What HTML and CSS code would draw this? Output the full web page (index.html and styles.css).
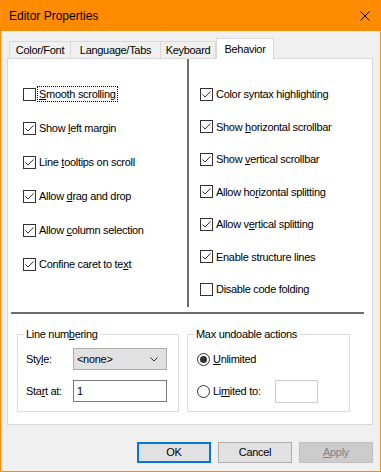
FILE: index.html
```html
<!DOCTYPE html>
<html lang="en">
<head>
    <meta charset="UTF-8">
    <title>Editor Properties</title>
    <link rel="stylesheet" href="styles.css">
</head>
<body>

    <div class="window">
        <!-- title bar -->
        <div class="titlebar">
            <span class="title">Editor Properties</span>
            <svg class="close" width="10" height="10" viewBox="0 0 10 10"><path d="M0.5 0.5L9.5 9.5M9.5 0.5L0.5 9.5" stroke="#000" stroke-width="1" fill="none"/></svg>
        </div>

        <div class="client">
            <!-- tabs -->
            <div class="tabs">
                <div class="tab t-color">Color/Font</div>
                <div class="tab t-lang">Language/Tabs</div>
                <div class="tab t-key">Keyboard</div>
                <div class="tab t-behavior active">Behavior</div>
            </div>

            <div class="panel">
                <div class="options">
                    <div class="col col-left">
                        <div class="opt"><span class="box"></span><span class="lbl focused"><u>S</u>mooth scrolling</span></div>
                        <div class="opt"><span class="box checked"></span><span class="lbl">Show <u>l</u>eft margin</span></div>
                        <div class="opt"><span class="box checked"></span><span class="lbl">Line <u>t</u>ooltips on scroll</span></div>
                        <div class="opt"><span class="box checked"></span><span class="lbl">Allow <u>d</u>rag and drop</span></div>
                        <div class="opt"><span class="box checked"></span><span class="lbl">Allow <u>c</u>olumn selection</span></div>
                        <div class="opt"><span class="box checked"></span><span class="lbl">Confine caret to te<u>x</u>t</span></div>
                    </div>
                    <div class="vsep"></div>
                    <div class="col col-right">
                        <div class="opt"><span class="box checked"></span><span class="lbl">Color syntax hi<u>g</u>hlighting</span></div>
                        <div class="opt"><span class="box checked"></span><span class="lbl">Show <u>h</u>orizontal scrollbar</span></div>
                        <div class="opt"><span class="box checked"></span><span class="lbl">Show <u>v</u>ertical scrollbar</span></div>
                        <div class="opt"><span class="box checked"></span><span class="lbl">Allow ho<u>r</u>izontal splitting</span></div>
                        <div class="opt"><span class="box checked"></span><span class="lbl">Allow v<u>e</u>rtical splitting</span></div>
                        <div class="opt"><span class="box checked"></span><span class="lbl">Enable structure lines</span></div>
                        <div class="opt"><span class="box"></span><span class="lbl">Disable code folding</span></div>
                    </div>
                </div>

                <div class="hsep"></div>

                <div class="groups">
                    <fieldset class="group group-lines">
                        <legend>Line num<u>b</u>ering</legend>
                        <div class="row">
                            <span class="field-label">Sty<u>l</u>e:</span>
                            <div class="select">
                                <span>&lt;none&gt;</span>
                                <svg width="8" height="5" viewBox="0 0 8 5"><path d="M0.5 0.5L4 4L7.5 0.5" stroke="#333" fill="none"/></svg>
                            </div>
                        </div>
                        <div class="row">
                            <span class="field-label">Sta<u>r</u>t at:</span>
                            <div class="textbox">1</div>
                        </div>
                    </fieldset>

                    <fieldset class="group group-undo">
                        <legend>Max undoable actions</legend>
                        <div class="row">
                            <span class="radio selected"></span><span class="lbl"><u>U</u>nlimited</span>
                        </div>
                        <div class="row">
                            <span class="radio"></span><span class="lbl">Li<u>m</u>ited to:</span>
                            <div class="textbox small disabled"></div>
                        </div>
                    </fieldset>
                </div>
            </div>

            <!-- buttons -->
            <div class="buttons">
                <div class="btn default">OK</div>
                <div class="btn">Cancel</div>
                <div class="btn disabled"><u>A</u>pply</div>
            </div>
        </div>
    </div>

</body>
</html>
```

FILE: styles.css
```css
/* base */
body {
    margin: 0;
    padding: 0;
    font-family: 'Liberation Sans', Arial, sans-serif;
    font-size: 11px;
    color: #000;
}

.window {
    width: 381px;
    height: 472px;
    box-sizing: border-box;
    border: 1px solid #ff8c00;
    border-top: none;
    background-color: #f0f0f0;
    display: flex;
    flex-direction: column;
}

/* title bar */
.titlebar {
    height: 31px;
    background-color: #ff8c00;
    display: flex;
    align-items: center;
    justify-content: space-between;
    padding: 0 10px 0 8px;
    flex-shrink: 0;
}

.title {
    font-size: 12px;
    line-height: 14px;
    padding-top: 1px;
}

.close {
    display: block;
}

.client {
    padding: 7px 7px 0 6px;
    letter-spacing: -0.3px;
}

/* tabs */
.tabs {
    display: flex;
    align-items: flex-end;
    height: 21px;
    margin-left: 2px;
}

.tab {
    box-sizing: border-box;
    height: 17px;
    margin-bottom: 1px;
    border: 1px solid #d9d9d9;
    border-bottom: none;
    background-color: #f0f0f0;
    text-align: center;
    line-height: 16px;
}

.t-color { width: 62px; }
.t-lang { width: 91px; margin-left: -1px; }
.t-key { width: 56px; margin-left: -1px; }

.tab.active {
    width: 58px;
    height: 21px;
    margin-bottom: 0;
    margin-left: 0;
    background-color: #fff;
    line-height: 20px;
    position: relative;
    z-index: 1;
}

.panel {
    box-sizing: border-box;
    height: 367px;
    margin-top: -1px;
    border: 1px solid #d9d9d9;
    background-color: #fff;
}

/* check boxes */
.options {
    display: flex;
    height: 248px;
}

.col {
    display: flex;
    flex-direction: column;
}

.col-left {
    width: 179px;
    padding: 18px 0 0 15px;
    box-sizing: border-box;
}

.col-left .opt {
    height: 34px;
}

.col-right {
    flex: 1;
    padding: 18.75px 0 0 11px;
}

.col-right .opt {
    height: 32.5px;
}

.opt {
    display: flex;
    align-items: center;
}

.box {
    width: 13px;
    height: 13px;
    box-sizing: border-box;
    border: 1px solid #333;
    background-color: #fff;
    flex-shrink: 0;
}

.box.checked {
    background-image: url("data:image/svg+xml,%3Csvg xmlns='http://www.w3.org/2000/svg' width='11' height='11'%3E%3Cpath d='M1.5 5.5L4 8L9.5 2.5' stroke='%23333' stroke-width='1' fill='none'/%3E%3C/svg%3E");
}

.lbl {
    margin-left: 2px;
    padding: 0 1px;
    line-height: 14px;
    white-space: nowrap;
}

.lbl.focused {
    outline: 1px dotted #000;
    outline-offset: 0;
}

u {
    text-underline-offset: 1px;
}

.vsep {
    width: 2px;
    background-color: #6d6d6d;
}

.hsep {
    height: 2px;
    width: 353px;
    margin: 5px 0 0 3px;
    background-color: #6d6d6d;
}

/* group boxes */
.groups {
    display: flex;
    gap: 8px;
    margin: 14px 0 0 9px;
}

.group {
    margin: 0;
    padding: 7px 6px 9px 6px;
    min-width: 0;
    border: 1px solid #dcdcdc;
    box-sizing: border-box;
}

.group-lines { width: 162px; }
.group-undo { width: 163px; }

.group legend {
    padding: 0 2px;
    line-height: 13px;
}

.row {
    display: flex;
    align-items: center;
    height: 22px;
}

.row + .row {
    margin-top: 10px;
}

.group-lines .row {
    padding-left: 2px;
}

.field-label {
    width: 47px;
    flex-shrink: 0;
}

.select {
    box-sizing: border-box;
    width: 94px;
    height: 22px;
    border: 1px solid #adadad;
    background-color: #e1e1e1;
    display: flex;
    align-items: center;
    justify-content: space-between;
    padding: 0 8px 0 3px;
}

.select svg {
    display: block;
}

.textbox {
    box-sizing: border-box;
    width: 94px;
    height: 22px;
    border: 1px solid #7a7a7a;
    background-color: #fff;
    padding-left: 3px;
    line-height: 20px;
}

.textbox.small {
    width: 43px;
    height: 23px;
    margin-left: 14px;
}

.textbox.disabled {
    border-color: #cccccc;
}

.group-undo .row {
    padding-left: 3px;
}

.radio {
    width: 13px;
    height: 13px;
    box-sizing: border-box;
    border: 1px solid #333;
    border-radius: 50%;
    background-color: #fff;
    flex-shrink: 0;
    position: relative;
}

.radio.selected::after {
    content: '';
    position: absolute;
    left: 2px;
    top: 2px;
    width: 7px;
    height: 7px;
    border-radius: 50%;
    background-color: #333;
}

/* buttons */
.buttons {
    display: flex;
    justify-content: flex-end;
    gap: 7px;
    margin-top: 17px;
    padding-right: 0;
}

.btn {
    box-sizing: border-box;
    width: 74px;
    height: 21px;
    border: 1px solid #adadad;
    background-color: #e1e1e1;
    text-align: center;
    line-height: 19px;
}

.btn.default {
    border: 2px solid #0078d7;
    line-height: 17px;
}

.btn.disabled {
    border-color: #bfbfbf;
    background-color: #cccccc;
    color: #838383;
}
```
